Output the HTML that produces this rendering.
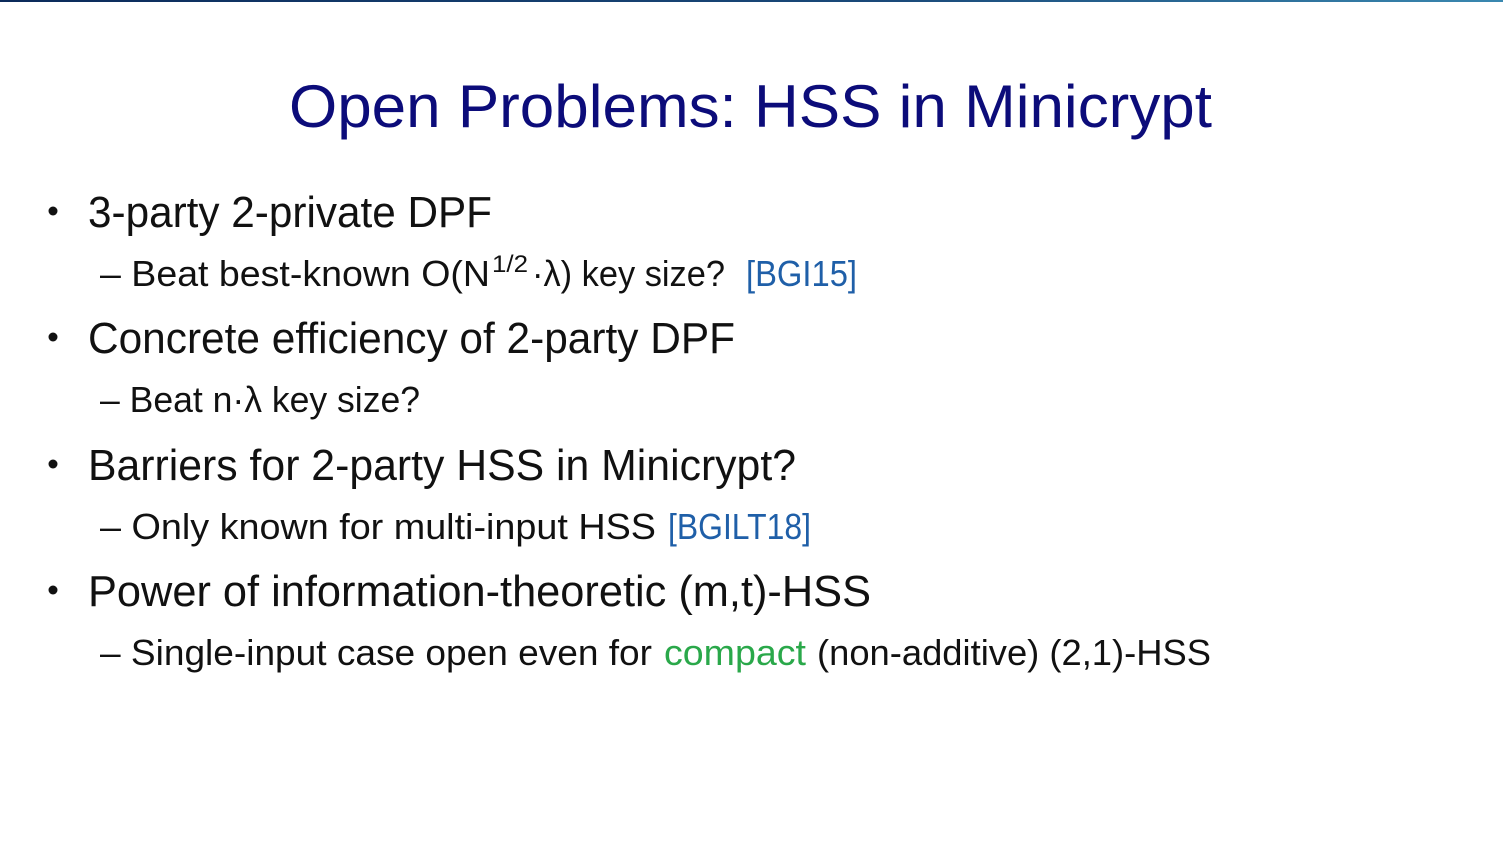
<!DOCTYPE html>
<html><head><meta charset="utf-8"><style>
html,body{margin:0;padding:0;background:#fff;}
body{width:1503px;height:847px;overflow:hidden;position:relative;}
.top{position:absolute;left:0;top:0;width:1503px;height:2px;background:linear-gradient(90deg,#0b2a5a,#1a4a7a 60%,#3a88b0);}
svg{position:absolute;left:0;top:0;}
text{font-family:"Liberation Sans",sans-serif;}
</style></head><body>
<div class="top"></div>
<svg width="1503" height="847" xmlns="http://www.w3.org/2000/svg">
<text x="289" y="127" font-size="60" fill="#0c0c7a" textLength="923" lengthAdjust="spacingAndGlyphs">Open Problems: HSS in Minicrypt</text>
<g fill="#111" font-size="44">
<circle cx="53" cy="211" r="4.5"/><circle cx="53" cy="337" r="4.5"/><circle cx="53" cy="464" r="4.5"/><circle cx="53" cy="590" r="4.5"/>
<text x="88" y="227" textLength="404" lengthAdjust="spacingAndGlyphs">3-party 2-private DPF</text>
<text x="88" y="353" textLength="647" lengthAdjust="spacingAndGlyphs">Concrete efficiency of 2-party DPF</text>
<text x="88" y="480" textLength="708" lengthAdjust="spacingAndGlyphs">Barriers for 2-party HSS in Minicrypt?</text>
<text x="88" y="606" textLength="783" lengthAdjust="spacingAndGlyphs">Power of information-theoretic (m,t)-HSS</text>
</g>
<g fill="#111" font-size="36">
<text x="100" y="286" textLength="390" lengthAdjust="spacingAndGlyphs">– Beat best-known O(N</text>
<text x="492" y="272" font-size="24" textLength="36" lengthAdjust="spacingAndGlyphs">1/2</text>
<text x="532" y="286" textLength="193" lengthAdjust="spacingAndGlyphs">·λ) key size?</text>
<text x="746" y="286" fill="#1f5fa8" textLength="111" lengthAdjust="spacingAndGlyphs">[BGI15]</text>
<text x="100" y="412" textLength="320" lengthAdjust="spacingAndGlyphs">– Beat n·λ key size?</text>
<text x="100" y="539" textLength="556" lengthAdjust="spacingAndGlyphs">– Only known for multi-input HSS</text>
<text x="668" y="539" fill="#1f5fa8" textLength="143" lengthAdjust="spacingAndGlyphs">[BGILT18]</text>
<text x="100" y="665" textLength="552" lengthAdjust="spacingAndGlyphs">– Single-input case open even for</text>
<text x="664" y="665" fill="#2aa84a" textLength="142" lengthAdjust="spacingAndGlyphs">compact</text>
<text x="817" y="665" textLength="394" lengthAdjust="spacingAndGlyphs">(non-additive) (2,1)-HSS</text>
</g>
</svg>
</body></html>
